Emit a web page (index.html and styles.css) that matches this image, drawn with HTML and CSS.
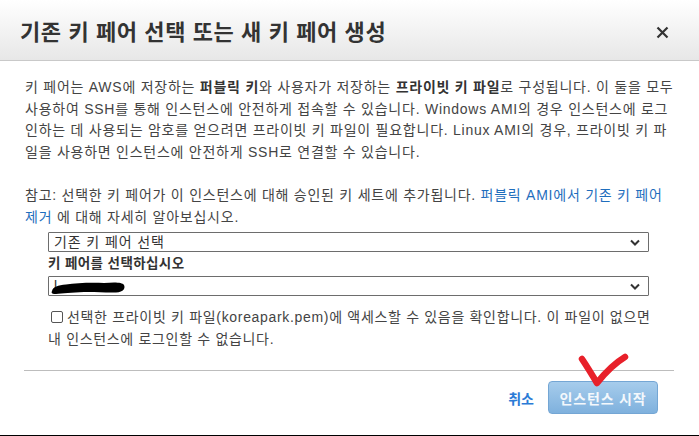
FILE: index.html
```html
<!DOCTYPE html>
<html lang="ko">
<head>
<meta charset="utf-8">
<link rel="stylesheet" href="styles.css">
</head>
<body>
<div class="modal">
  <div class="header">
    <h1 class="title">기존 키 페어 선택 또는 새 키 페어 생성</h1>
    <span class="close">
      <svg width="13" height="13" viewBox="0 0 13 13"><path d="M1.5 1.5 L11.5 11.5 M11.5 1.5 L1.5 11.5" stroke="#333" stroke-width="2.2" fill="none"/></svg>
    </span>
  </div>
  <div class="content">
    <p class="para">키 페어는 AWS에 저장하는 <b>퍼블릭 키</b>와 사용자가 저장하는 <b>프라이빗 키 파일</b>로 구성됩니다. 이 둘을 모두<br>사용하여 SSH를 통해 인스턴스에 안전하게 접속할 수 있습니다. Windows AMI의 경우 인스턴스에 로그<br>인하는 데 사용되는 암호를 얻으려면 프라이빗 키 파일이 필요합니다. Linux AMI의 경우, 프라이빗 키 파<br>일을 사용하면 인스턴스에 안전하게 SSH로 연결할 수 있습니다.</p>
    <p class="para">참고: 선택한 키 페어가 이 인스턴스에 대해 승인된 키 세트에 추가됩니다. <a class="link" href="#">퍼블릭 AMI에서 기존 키 페어<br>제거</a> 에 대해 자세히 알아보십시오.</p>
    <div class="form">
      <div class="select">
        <span class="select-text">기존 키 페어 선택</span>
        <svg class="chev" width="10" height="7" viewBox="0 0 10 7"><path d="M1 1.5 L5 5.5 L9 1.5" stroke="#333" stroke-width="2" fill="none"/></svg>
      </div>
      <div class="label">키 페어를 선택하십시오</div>
      <div class="select select-redacted">
        <span class="select-text">l</span>
        <svg class="scribble" width="76" height="16" viewBox="0 0 76 16"><path d="M2 12 C3 8 8 6 16 5.5 C26 4 40 3.5 54 4 C64 3.2 72 3 74 6 C75.5 9 74 13 66 13.5 C56 14 44 12.5 34 13 C22 13.5 12 14.5 6 15 C2 15.2 1 14 2 12 Z" fill="#000"/></svg>
        <svg class="chev" width="10" height="7" viewBox="0 0 10 7"><path d="M1 1.5 L5 5.5 L9 1.5" stroke="#333" stroke-width="2" fill="none"/></svg>
      </div>
      <div class="ack">
        <span class="checkbox"></span>선택한 프라이빗 키 파일(koreapark.pem)에 액세스할 수 있음을 확인합니다. 이 파일이 없으면<br>내 인스턴스에 로그인할 수 없습니다.
      </div>
    </div>
    <div class="divider"></div>
    <div class="footer">
      <a class="cancel" href="#">취소</a>
      <button class="launch">인스턴스 시작</button>
      <svg class="check-mark" width="56" height="36" viewBox="0 0 56 36"><path d="M5 6 C9 12 14 20 20 30 C28 20 38 10 48 4" stroke="#e8202a" stroke-width="6.5" fill="none" stroke-linecap="round" stroke-linejoin="round"/></svg>
    </div>
  </div>
</div>
</body>
</html>
```

FILE: styles.css
```css
* { box-sizing: border-box; }
html, body {
  margin: 0;
  padding: 0;
  background: #fff;
}
body {
  font-family: "Liberation Sans", "Noto Sans CJK KR", Arial, sans-serif;
  color: #444;
}
.modal {
  width: 699px;
  height: 436px;
  border-bottom: 1px solid #000;
  display: flex;
  flex-direction: column;
}
.header {
  height: 61px;
  flex: none;
  background: linear-gradient(#ffffff, #e7e7e7);
  border-bottom: 1px solid #c9c9c9;
  display: flex;
  align-items: center;
  justify-content: space-between;
  padding: 0 30px 0 20px;
}
.title {
  margin: 0;
  font-size: 22px;
  font-weight: bold;
  color: #333;
  letter-spacing: 0.6px;
}
.close {
  display: flex;
  margin-top: 4px;
}
.content {
  padding: 0 25px 0 24px;
  display: flex;
  flex-direction: column;
  flex: 1;
}
.para {
  margin: 16px 0 0 1px;
  font-size: 14px;
  letter-spacing: 0.75px;
  line-height: 21.6px;
  white-space: nowrap;
}
.para + .para {
  margin-top: 21.6px;
}
.para b {
  color: #333;
}
.link {
  color: #1f6ebd;
  text-decoration: none;
}
.form {
  margin: 4px 0 0 24px;
  width: 601px;
  display: flex;
  flex-direction: column;
}
.select {
  height: 20px;
  border: 1px solid #6d6d6d;
  border-radius: 1px;
  display: flex;
  align-items: center;
  justify-content: space-between;
  padding: 0 8px 0 5px;
  font-size: 14px;
  letter-spacing: 0.9px;
  color: #333;
  position: relative;
}
.select-text {
  line-height: 18px;
}
.chev {
  flex: none;
}
.scribble {
  position: absolute;
  left: 1px;
  top: 2px;
}
.label {
  font-size: 13.5px;
  font-weight: bold;
  letter-spacing: 0.4px;
  color: #333;
  line-height: 24px;
}
.ack {
  margin-top: 10px;
  font-size: 14px;
  letter-spacing: 0.68px;
  line-height: 22px;
  color: #444;
  white-space: nowrap;
}
.checkbox {
  display: inline-block;
  width: 12px;
  height: 12px;
  border: 1px solid #555;
  border-radius: 2px;
  margin: 0 4px 0 3px;
  vertical-align: -1px;
}
.divider {
  margin-top: 20px;
  height: 1px;
  background: #bdbdbd;
  width: 650px;
}
.footer {
  display: flex;
  justify-content: flex-end;
  align-items: center;
  gap: 14px;
  margin-top: 10px;
  padding-right: 16px;
  position: relative;
}
.cancel {
  color: #2b7bd6;
  text-decoration: none;
  font-size: 14px;
  font-weight: bold;
}
.launch {
  width: 110px;
  height: 33px;
  border: 1px solid #74a6d4;
  border-radius: 4px;
  background: linear-gradient(#a6ccec, #7fb1dd);
  color: #f4f8fc;
  font-family: inherit;
  font-size: 14px;
  font-weight: bold;
  letter-spacing: 0.8px;
  padding: 0;
}
.check-mark {
  position: absolute;
  left: 553px;
  top: -28px;
}
```
